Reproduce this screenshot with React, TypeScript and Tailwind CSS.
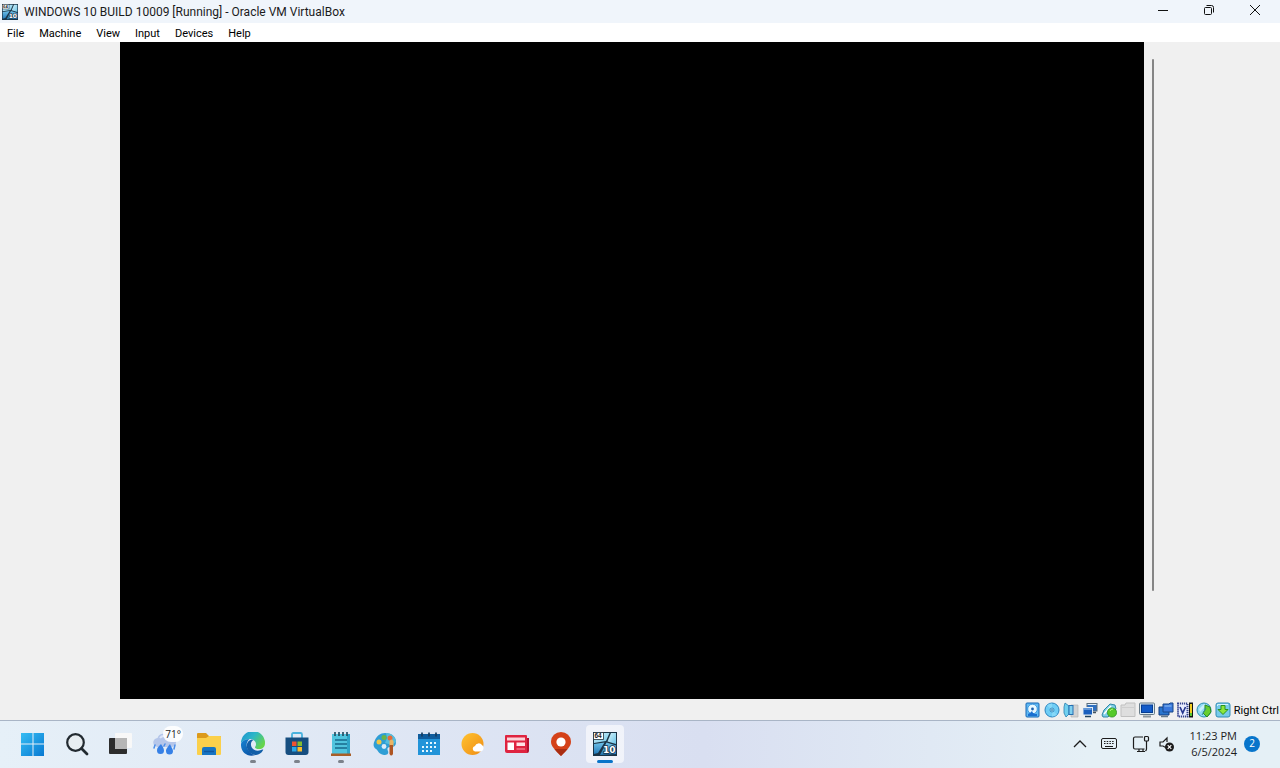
import React from 'react'

const menus = ['File', 'Machine', 'View', 'Input', 'Devices', 'Help']

function VmIcon({ className }: { className: string }) {
  return (
    <svg className={className} viewBox="0 0 24 24" aria-hidden="true">
      <defs>
        <linearGradient id="vmLight" x1="0" y1="0" x2="1" y2="1">
          <stop offset="0" stopColor="#d9f4fb" />
          <stop offset="1" stopColor="#6cc4e8" />
        </linearGradient>
        <linearGradient id="vmDark" x1="0" y1="0" x2="0" y2="1">
          <stop offset="0" stopColor="#6fc2ea" />
          <stop offset="1" stopColor="#2379b8" />
        </linearGradient>
      </defs>
      <rect width="24" height="24" fill="#1a3346" />
      <path d="M1 1h15.500l-3.500 8L1 11z" fill="url(#vmLight)" />
      <path d="M18 1h5v11l-8.500-2.500z" fill="url(#vmLight)" />
      <path d="M1 12l10.500-1.500L5 21l-4 1z" fill="url(#vmDark)" />
      <path d="M13.500 10.500L23 13.500V22l-16 1z" fill="url(#vmDark)" />
      <rect x="0.500" y="0.500" width="10" height="7" fill="#fff" stroke="#20303c" strokeWidth="0.800" />
      <text x="1.500" y="6.300" fontSize="6.500" fontWeight="bold" fontFamily="Liberation Sans, sans-serif" fill="#222">64</text>
      <text x="10" y="20.500" fontSize="9" fontWeight="bold" fontFamily="DejaVu Sans, sans-serif" fill="#fff" stroke="#17334a" strokeWidth="1.600" paintOrder="stroke">10</text>
    </svg>
  )
}

// ---- VirtualBox status bar ----

const HardDisk = () => (
  <svg viewBox="0 0 16 16" className="size-4">
    <rect x="1" y="1" width="13" height="14" rx="1" fill="#5fb8f2" stroke="#1767b5" />
    <circle cx="7.500" cy="7" r="4.800" fill="#e8f8ff" stroke="#2c8ad8" strokeWidth="0.800" />
    <circle cx="7.500" cy="7" r="1.400" fill="#1c5fae" />
    <path d="M3 12l2-1 2-2 1 2 2 1h2v2H3z" fill="#1a6fd0" />
  </svg>
)

const Disc = () => (
  <svg viewBox="0 0 16 16" className="size-4">
    <circle cx="8" cy="8" r="7" fill="#6fcdf5" stroke="#2b84bf" />
    <path d="M8 8L3 3.500A7 7 0 0 1 8 1.500zM8 8l5 4.500a7 7 0 0 1-5 2z" fill="#86d8f8" />
    <circle cx="8" cy="8" r="2" fill="#a5e2fb" stroke="#2274ac" strokeWidth="0.700" />
    <circle cx="8" cy="8" r="0.800" fill="#205f91" />
  </svg>
)

const Audio = () => (
  <svg viewBox="0 0 16 16" className="size-4">
    <path d="M8 3h7v12H8z" fill="#d2d2d2" stroke="#b5b5b5" strokeWidth="0.700" />
    <path d="M1 5l1-4 4 3v8l-3 3-2-4z" fill="#72d0ef" stroke="#287fae" strokeWidth="0.800" />
    <rect x="6" y="3.500" width="4" height="9" fill="#7fd0f0" stroke="#266fb2" />
  </svg>
)

const Network = () => (
  <svg viewBox="0 0 16 16" className="size-4">
    <rect x="5" y="1.500" width="10" height="7.500" fill="#2f6fc0" stroke="#5b6d7c" />
    <path d="M5.500 2.500h9" stroke="#e5f1f9" />
    <path d="M10 10.500h4" stroke="#44535e" strokeWidth="1.500" />
    <rect x="1" y="5.500" width="9.500" height="7.500" fill="#1c5fbd" stroke="#e6eef4" />
    <path d="M2 7h7.500" stroke="#a4cdf2" />
    <path d="M3 14.500h6" stroke="#24445f" strokeWidth="1.500" />
  </svg>
)

const Usb = () => (
  <svg viewBox="0 0 16 16" className="size-4">
    <path d="M1 13L3 8l6-6 5 1 1 4-8 8H2z" fill="#80cfe8" stroke="#3087a7" />
    <path d="M3 12l7-8" stroke="#fff" strokeWidth="1.500" />
    <circle cx="11" cy="10.500" r="4.600" fill="#56c929" stroke="#238719" strokeWidth="0.700" />
    <path d="M9 9a3 3 0 0 1 3-2" stroke="#b5f887" fill="none" />
  </svg>
)

const SharedFolder = () => (
  <svg viewBox="0 0 16 16" className="size-4">
    <path d="M1 14.500V3h4l1-2h9v13.500z" fill="#dedede" stroke="#c0c0c0" />
    <path d="M2 5.500h12" stroke="#cecece" />
  </svg>
)

const Display = () => (
  <svg viewBox="0 0 16 16" className="size-4">
    <rect x="0.500" y="1" width="15" height="11.500" rx="1" fill="#d8e9f2" stroke="#667987" />
    <rect x="2.500" y="3" width="11" height="7.500" fill="#125bc9" stroke="#063d92" />
    <path d="M4 14.500h8" stroke="#8c989f" strokeWidth="2" />
  </svg>
)

const Recording = () => (
  <svg viewBox="0 0 16 16" className="size-4">
    <path d="M1 5h10v8H1z" fill="#2a75ce" stroke="#123d7e" />
    <path d="M5 2h6l1-1h3v9H5z" fill="#3a78dc" stroke="#174687" />
    <path d="M6.500 4h7" stroke="#91c4f2" />
    <path d="M3 14.500h7" stroke="#66798a" strokeWidth="1.500" />
  </svg>
)

const Cpu = () => (
  <svg viewBox="0 0 16 16" className="size-4">
    <rect x="1" y="1.500" width="9.500" height="13" fill="#e8edff" stroke="#34438f" strokeWidth="2" strokeDasharray="1.200 0.800" />
    <path d="M3 5l2.700 6L8.500 5" fill="none" stroke="#26378f" strokeWidth="1.700" />
    <rect x="12" y="0.500" width="4" height="15" fill="#131313" />
    <path d="M14 2v12" stroke="#f2cd21" strokeWidth="2" />
    <path d="M14 11v3" stroke="#57c732" strokeWidth="2" />
  </svg>
)

const Mouse = () => (
  <svg viewBox="0 0 16 16" className="size-4">
    <circle cx="8" cy="8" r="7" fill="#8fd9f2" stroke="#2b8fb1" />
    <path d="M3 7l5-5 2 2-6 6z" fill="#c9f0fc" />
    <path d="M9 3l5 2 1 5-4 5-4-4 2-3z" fill="#67ce2f" stroke="#278b21" />
    <path d="M6 13l4-7" stroke="#358c99" />
  </svg>
)

const Keyboard = () => (
  <svg viewBox="0 0 16 16" className="size-4">
    <rect x="1" y="1" width="14" height="14" rx="2" fill="#78cbea" stroke="#338bb6" />
    <path d="M2.500 4V2.500H13" stroke="#d4f4ff" fill="none" />
    <path d="M6 3.500h4v4h3l-5 5-5-5h3z" fill="#8de63c" stroke="#2a931f" />
  </svg>
)

const statusItems = [
  { label: 'Hard disks', icon: <HardDisk /> },
  { label: 'Optical drives', icon: <Disc /> },
  { label: 'Audio', icon: <Audio /> },
  { label: 'Network', icon: <Network /> },
  { label: 'USB devices', icon: <Usb /> },
  { label: 'Shared folders', icon: <SharedFolder /> },
  { label: 'Display', icon: <Display /> },
  { label: 'Recording', icon: <Recording /> },
  { label: 'Processor', icon: <Cpu /> },
  { label: 'Mouse integration', icon: <Mouse /> },
  { label: 'Keyboard', icon: <Keyboard /> },
]

// ---- Taskbar ----

const Start = () => (
  <svg viewBox="0 0 24 24" className="size-6">
    <defs>
      <linearGradient id="start" x1="0" y1="0" x2="1" y2="1">
        <stop offset="0" stopColor="#35bdf3" />
        <stop offset="1" stopColor="#0879d2" />
      </linearGradient>
    </defs>
    <path d="M0 1h11.500v10.500H0zM12.500 1H23v10.500H12.500zM0 12.500h11.500V24H0zM12.500 12.500H23V24H12.500z" fill="url(#start)" />
  </svg>
)

const Search = () => (
  <svg viewBox="0 0 24 24" className="size-6" fill="none" stroke="#222a30">
    <circle cx="10.500" cy="10.500" r="8.300" strokeWidth="2.200" fill="#e8eef2" />
    <path d="M16.500 16.500l5.500 5.500" strokeWidth="2.800" strokeLinecap="round" />
  </svg>
)

const TaskView = () => (
  <svg viewBox="0 0 24 24" className="size-6">
    <rect x="6" y="1" width="17" height="15" rx="1" fill="#f8f8f8" />
    <rect x="0" y="6" width="18" height="16" rx="1" fill="#2d2d2d" />
    <rect x="6" y="6" width="12" height="11" fill="#b6b6b6" />
  </svg>
)

const Weather = () => (
  <svg viewBox="0 0 24 24" className="size-6">
    <path d="M5 15a4.500 4.500 0 0 1-.5-9A7 7 0 0 1 17 5a5 5 0 0 1 2 10z" fill="#b5c6ea" />
    <path d="M7 6a5 5 0 0 1 8 0" stroke="#dce6fa" strokeWidth="2" fill="none" />
    <path d="M8 12c-3 3-4 4-4 6.500a3.500 3.500 0 0 0 7 0c0-2.500-2-4.500-3-6.500zM17 12c-3 4-4 5-4 7a3.500 3.500 0 0 0 7 0c0-2-2-4-3-7z" fill="#3680e6" />
    <path d="M2 13l-1 3M12 12l-1 2M22 13l-1 4" stroke="#4c8ee9" strokeWidth="1.500" strokeLinecap="round" />
  </svg>
)

const Explorer = () => (
  <svg viewBox="0 0 26 24" className="h-6 w-[26px]">
    <path d="M1 2q0-1 1-1h8l3 3h11q1 0 1 1v16q0 1-1 1H2q-1 0-1-1z" fill="#dc9a1c" />
    <path d="M1 6h9l3-2h11q1 0 1 1v17q0 1-1 1H2q-1 0-1-1z" fill="#fbd04b" />
    <path d="M6 23v-6q0-2 2-2h10q2 0 2 2v6z" fill="#1775c3" />
    <path d="M8 19.500h10" stroke="#1057a0" strokeWidth="1.500" />
  </svg>
)

const Edge = () => (
  <svg viewBox="0 0 24 24" className="size-6">
    <defs>
      <linearGradient id="edgeTop" x1="0" y1="0" x2="1" y2="0.600">
        <stop offset="0" stopColor="#1e8fd0" />
        <stop offset="0.500" stopColor="#2cb6c8" />
        <stop offset="1" stopColor="#66d54b" />
      </linearGradient>
      <linearGradient id="edgeSide" x1="0" y1="0" x2="1" y2="1">
        <stop offset="0" stopColor="#1583d2" />
        <stop offset="1" stopColor="#0b4c9e" />
      </linearGradient>
    </defs>
    <path d="M0 11a12 12 0 0 1 24 0c0 4-2.500 6-6 6-2.500 0-4-.8-4-1.800 0-.7 1-1.200 1-3C15 9 12 7 9 7c-3.500 0-7 1.500-9 4z" fill="url(#edgeTop)" />
    <path d="M0 12C.5 9 4.500 7 8.500 7.200 6 9 5 12 6 15c1 4 4.500 8 8.500 8C7 26-.5 20.500 0 12z" fill="url(#edgeSide)" />
    <path d="M11 7.500c-3 .5-5.500 3-5.200 7C6.200 19 10 23 15 23c3 0 5.500-2 7-4.700.5-.7 0-1-.5-.7-4 2-9 1.400-11-2.600-1.200-3-.5-5.500 2-7z" fill="#135fa8" />
  </svg>
)

const Store = () => (
  <svg viewBox="0 0 24 24" className="size-6">
    <path d="M7 6V2.500Q7 1 8.500 1h7Q17 1 17 2.500V6" fill="none" stroke="#49b2de" strokeWidth="1.800" />
    <path d="M0.500 5.500h23V20q0 3-3 3h-17q-3 0-3-3z" fill="#164e80" />
    <path d="M7 9.500h4.500V14H7z" fill="#ef5330" />
    <path d="M12.500 9.500H17V14h-4.500z" fill="#82bd31" />
    <path d="M7 15h4.500v4.500H7z" fill="#29a7e8" />
    <path d="M12.500 15H17v4.500h-4.500z" fill="#fcbd29" />
  </svg>
)

const Notepad = () => (
  <svg viewBox="0 0 24 24" className="size-6">
    <path d="M3 2h18v20H3z" fill="#50c4de" />
    <path d="M18 2h3v20h-3z" fill="#2ea4c8" />
    <path d="M2 21.500h20V24H2z" fill="#a85f28" />
    <path d="M6 8h12M6 12h12M6 16h12" stroke="#17698d" strokeWidth="1.500" />
    <path d="M6 0v4M10 0v4M14 0v4M18 0v4" stroke="#244f65" strokeWidth="1.700" />
  </svg>
)

const Paint = () => (
  <svg viewBox="0 0 24 24" className="size-6">
    <path d="M12 1c7 0 11 4 11 9 0 4-2 5-5 5-4 0-4 2-3 4 1 3-1 4-4 4-6-1-6-5-8-6-3-2-3-5-1-9s5-7 10-7z" fill="#2f9ed5" />
    <path d="M13 1c6 0 10 4 10 9l-4 3-7-2 2-5z" fill="#55bddd" />
    <circle cx="6" cy="10" r="2.500" fill="#f1c644" />
    <circle cx="11" cy="5.500" r="2.500" fill="#69b549" />
    <circle cx="17" cy="6" r="2.500" fill="#e76a37" />
    <circle cx="11" cy="14.500" r="2.400" fill="#dcebf8" />
    <path d="M16.500 9q2-3 4 0v5h-4z" fill="#eab363" />
    <path d="M16.500 13h3.500v9q-1.700 3-3.500 0z" fill="#ae5522" />
  </svg>
)

const Calendar = () => (
  <svg viewBox="0 0 24 24" className="size-6">
    <path d="M1 2h22v21H1z" fill="#2294d9" />
    <path d="M1 2h22v5H1z" fill="#105d9d" />
    <path d="M5 .5v4M12 .5v4M19 .5v4" stroke="#163d61" strokeWidth="1.700" />
    <path d="M9 11h2m2 0h2m2 0h2M5 15h2m2 0h2m2 0h2m2 0h2M5 19h2m2 0h2m2 0h2" stroke="#e4f7ff" strokeWidth="2" />
  </svg>
)

const Sun = () => (
  <svg viewBox="0 0 24 24" className="size-6">
    <defs>
      <linearGradient id="sun" x1="0" y1="0" x2="1" y2="1">
        <stop offset="0" stopColor="#ffc331" />
        <stop offset="1" stopColor="#ef8c13" />
      </linearGradient>
    </defs>
    <circle cx="11.500" cy="12" r="11" fill="url(#sun)" />
    <path d="M14 19.500a2.800 2.800 0 0 1 0-5.500 4 4 0 0 1 7-1q2 1 1.500 3.500-.5 3-3.500 3z" fill="#fff" />
  </svg>
)

const News = () => (
  <svg viewBox="0 0 24 24" className="size-6">
    <path d="M20 6h4v13q0 2-2 2H4v-3h16z" fill="#b3122f" />
    <path d="M0 4q0-1 1-1h20q1 0 1 1v17H2q-2 0-2-2z" fill="#df2440" />
    <path d="M2 5.500h18v3H2z" fill="#fbd3d8" />
    <path d="M2.500 10.500H9V18H2.500z" fill="#fff" />
    <path d="M11.500 10.500H20V14h-8.500z" fill="#ffe2e5" />
    <path d="M11.500 17H20" stroke="#f07586" strokeWidth="1.500" />
  </svg>
)

const MapPin = () => (
  <svg viewBox="0 0 24 24" className="size-6">
    <path d="M12 24C5 17 2 14 2 9.500A10 9.500 0 0 1 22 9.500C22 14 19 17 12 24z" fill="#d44119" />
    <path d="M12 24c-3-3-5-5-6.500-7h13Q16 20 12 24z" fill="#a92d12" />
    <circle cx="12" cy="10" r="4.600" fill="#fff" />
  </svg>
)

interface TaskbarApp {
  label: string
  icon: React.ReactNode
  open?: boolean
  active?: boolean
  badge?: string
}

const apps: TaskbarApp[] = [
  { label: 'Start', icon: <Start /> },
  { label: 'Search', icon: <Search /> },
  { label: 'Task View', icon: <TaskView /> },
  { label: 'Weather', icon: <Weather />, badge: '71°' },
  { label: 'File Explorer', icon: <Explorer /> },
  { label: 'Microsoft Edge', icon: <Edge />, open: true },
  { label: 'Microsoft Store', icon: <Store />, open: true },
  { label: 'Notepad', icon: <Notepad />, open: true },
  { label: 'Paint', icon: <Paint /> },
  { label: 'Calendar', icon: <Calendar /> },
  { label: 'MSN Weather', icon: <Sun /> },
  { label: 'News', icon: <News /> },
  { label: 'Maps', icon: <MapPin /> },
  { label: 'Oracle VM VirtualBox', icon: <VmIcon className="size-6" />, open: true, active: true },
]

function TitleBar() {
  return (
    <header className="flex h-[23px] items-center bg-[#f0f5fb] pl-0.5">
      <VmIcon className="size-4" />
      <h1 className="ml-1.5 flex-1 font-['Roboto',sans-serif] text-xs text-[#1b1b1b]">
        WINDOWS 10 BUILD 10009 [Running] - Oracle VM VirtualBox
      </h1>
      <div className="flex h-full pr-0.5 pb-0.5">
        <button aria-label="Minimize" className="flex w-[46px] items-center justify-center">
          <svg viewBox="0 0 12 12" className="size-3"><path d="M1 5.500h10" stroke="#111" /></svg>
        </button>
        <button aria-label="Restore" className="flex w-[46px] items-center justify-center">
          <svg viewBox="0 0 12 12" className="size-3" fill="none" stroke="#111">
            <rect x="1.500" y="2.500" width="7" height="7" rx="1" />
            <path d="M3.500 0.500h5q2 0 2 2v5" />
          </svg>
        </button>
        <button aria-label="Close" className="flex w-[46px] items-center justify-center">
          <svg viewBox="0 0 12 12" className="size-3"><path d="M1 0l10 10M11 0L1 10" stroke="#111" /></svg>
        </button>
      </div>
    </header>
  )
}

function MenuBar() {
  return (
    <nav className="flex h-[19px] items-center gap-[15px] bg-white pt-0.5 pl-[7px] font-['Roboto',sans-serif] text-[11px] leading-4 text-black">
      {menus.map((menu) => (
        <button key={menu}>{menu}</button>
      ))}
    </nav>
  )
}

function StatusBar() {
  return (
    <footer className="flex h-[21px] items-center justify-end gap-[3px] bg-[#f0f0f0] pr-px">
      {statusItems.map((item) => (
        <button key={item.label} aria-label={item.label}>{item.icon}</button>
      ))}
      <span className="pt-0.5 font-['Roboto',sans-serif] text-[11px] leading-4 text-black">Right Ctrl</span>
    </footer>
  )
}

function Taskbar() {
  return (
    <div className="flex h-12 items-center justify-between border-t border-[#a9b5c6] bg-linear-to-r from-[#e6f0f8] from-0% via-[#d9dff1] via-55% to-[#e5f0f6] to-85% pr-5 pb-0.5 pl-[11px]">
      <div className="flex">
        {apps.map((app) => (
          <button key={app.label} aria-label={app.label} className="relative flex h-11 w-11 items-center justify-center">
            {app.active && <span className="absolute inset-x-[3px] inset-y-[3px] rounded bg-white/60" />}
            <span className="relative">{app.icon}</span>
            {app.badge && (
              <span className="absolute top-1 right-1 rounded-full bg-white/90 px-0.5 text-[10px] leading-4 text-[#222]">{app.badge}</span>
            )}
            {app.open && !app.active && <span className="absolute bottom-[3px] h-[3px] w-1.5 rounded-full bg-[#7c828b]" />}
            {app.active && <span className="absolute bottom-[3px] h-[3px] w-4 rounded-full bg-[#0874c9]" />}
          </button>
        ))}
      </div>
      <div className="flex items-center text-[#1c1c1c]">
        <button aria-label="Show hidden icons" className="mr-3">
          <svg viewBox="0 0 16 16" className="size-4" fill="none" stroke="currentColor"><path d="M2 11l6-6 6 6" strokeWidth="1.300" /></svg>
        </button>
        <button aria-label="Touch keyboard" className="mr-3.5">
          <svg viewBox="0 0 18 16" className="h-4 w-[18px]" fill="none" stroke="currentColor">
            <rect x="1.500" y="2.500" width="15" height="10" rx="1.500" />
            <path d="M4 5.500h10M4 7.500h10" strokeDasharray="1.500 1.200" />
            <path d="M5 10.500h8" />
          </svg>
        </button>
        <button aria-label="Network and volume" className="mr-3.5 flex gap-2">
          <svg viewBox="0 0 18 18" className="size-[18px]" fill="none" stroke="currentColor" strokeWidth="1.200">
            <path d="M11 2H3Q1.500 2 1.500 3.500v9Q1.500 14 3 14h9.500M5 16.500h8M7 14v2.500M11 14v2.500" />
            <rect x="12.500" y="1.500" width="4" height="4.500" rx="1" />
            <path d="M14.500 6v8q0 1-1 2" />
          </svg>
          <svg viewBox="0 0 18 18" className="size-[18px]" fill="none" stroke="currentColor">
            <path d="M8.500 13L5 11H2V7h3l4-4v4" strokeWidth="1.200" />
            <circle cx="11.500" cy="12" r="4.500" fill="#1c1c1c" stroke="none" />
            <path d="M9.700 10.200l3.600 3.600M13.300 10.200l-3.600 3.600" stroke="#fff" strokeWidth="1.200" />
          </svg>
        </button>
        <button className="mr-[7px] flex flex-col items-end text-[11px] leading-4">
          <time>11:23 PM</time>
          <time>6/5/2024</time>
        </button>
        <button aria-label="2 new notifications" className="flex size-4 items-center justify-center rounded-full bg-[#0875cb] text-[10px] text-white">2</button>
      </div>
    </div>
  )
}

function App() {
  return (
    <div className="flex min-h-screen flex-col bg-[#f0f0f0] font-['Open_Sans',sans-serif]">
      <TitleBar />
      <MenuBar />
      <main className="flex flex-1 justify-center">
        <div className="w-full max-w-[1024px] bg-black" />
        <div className="flex w-4 justify-center pt-[17px] pb-[108px] pl-0.5">
          <div className="w-0.5 rounded-full bg-[#858585]" />
        </div>
      </main>
      <StatusBar />
      <Taskbar />
    </div>
  )
}

export default App
